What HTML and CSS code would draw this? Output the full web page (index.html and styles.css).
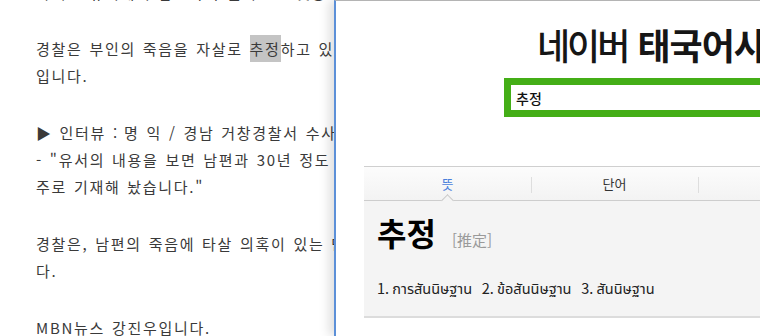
FILE: index.html
```html
<!DOCTYPE html>
<html lang="ko">
<head>
<meta charset="utf-8">
<title>네이버 태국어사전</title>
<link rel="stylesheet" href="styles.css">
</head>
<body>
<div class="screen">
  <article class="article">
    <p class="para para-cut">
      <span class="line">아내는 유서에서 남편과의 불화로 오랫동안 힘들었다고 적었습니다.</span>
    </p>
    <p class="para">
      <span class="line">경찰은 부인의 죽음을 자살로 <span class="sel">추정</span>하고 있지만 남편의 사망 경위는 조사 중</span>
      <span class="line">입니다.</span>
    </p>
    <p class="para">
      <span class="line">▶ 인터뷰 <span class="tight">:</span> 명 익 / 경남 거창경찰서 수사과장</span>
      <span class="line">- "유서의 내용을 보면 남편과 30년 정도 살면서 힘들었던 부분을 위</span>
      <span class="line">주로 기재해 놨습니다."</span>
    </p>
    <p class="para">
      <span class="line">경찰은, 남편의 죽음에 타살 의혹이 있는 만큼 정확한 사인을 조사하고 있습니</span>
      <span class="line">다.</span>
    </p>
    <p class="para">
      <span class="line">MBN뉴스 강진우입니다.</span>
    </p>
  </article>

  <section class="dict">
    <h1 class="dict-title"><span class="brand">네이버</span> <span class="name">태국어사전</span></h1>
    <div class="search">
      <span class="search-text">추정</span>
    </div>
    <div class="result">
      <nav class="tabs">
        <span class="tab tab-on">뜻<i class="caret"></i></span>
        <span class="tab">단어</span>
        <span class="tab">예문</span>
      </nav>
      <div class="entry">
        <div class="head">
          <span class="word">추정</span>
          <span class="hanja">[推定]</span>
        </div>
        <p class="means">1. การสันนิษฐาน&nbsp;&nbsp; 2. ข้อสันนิษฐาน&nbsp;&nbsp; 3. สันนิษฐาน</p>
      </div>
    </div>
  </section>
</div>
</body>
</html>
```

FILE: styles.css
```css
html, body {
  margin: 0;
  padding: 0;
  background: #fff;
}

.screen {
  display: flex;
  width: 760px;
  height: 336px;
  overflow: hidden;
  font-family: "Noto Sans CJK KR", "Noto Sans Thai", "Noto Sans", sans-serif;
}

.article {
  flex: 0 0 334px;
  overflow: hidden;
  margin-top: -21px;
  padding-left: 36px;
  box-sizing: border-box;
  color: #3a3a3a;
  font-size: 15px;
  letter-spacing: 1.7px;
  word-spacing: 1px;
}

.tight {
  letter-spacing: 0;
}

.para {
  margin: 0 0 30px 0;
}

.para-cut {
  margin-bottom: 29px;
}

.line {
  display: block;
  white-space: nowrap;
  line-height: 27px;
  height: 27px;
}

.sel {
  background: #c4c4c4;
  padding: 3px 0 3px 0;
}

.dict {
  flex: 1 1 auto;
  position: relative;
  overflow: hidden;
  background: #fff;
  border-left: 2px solid #5c90d8;
  border-top: 1px solid #b4b4b4;
  box-shadow: -5px 0 10px rgba(0, 0, 0, 0.13);
  padding-top: 23px;
  color: #111;
}

.dict-title {
  margin: 0 0 0 201px;
  white-space: nowrap;
  font-size: 36px;
  line-height: 40px;
  height: 40px;
  font-weight: 400;
  color: #161616;
}

.brand {
  letter-spacing: -3px;
  font-weight: 500;
}

.name {
  letter-spacing: -1px;
  font-weight: 700;
}

.search {
  margin: 14px 0 0 168px;
  width: 420px;
  height: 25px;
  border: 7px solid #44ae17;
  display: flex;
  align-items: center;
  padding-left: 5px;
}

.search-text {
  font-size: 14px;
  font-weight: 500;
  color: #111;
}

.result {
  margin: 49px 0 0 28px;
  width: 600px;
  border-top: 1px solid #cfcfcf;
  border-bottom: 2px solid #dcdcdc;
}

.tabs {
  display: flex;
  height: 33px;
  border-bottom: 1px solid #cdcdcd;
  background: linear-gradient(#fcfcfc, #f3f3f3);
}

.tab {
  position: relative;
  flex: 0 0 167px;
  display: flex;
  align-items: center;
  justify-content: center;
  font-size: 13px;
  color: #333;
}

.tab + .tab::before {
  content: "";
  position: absolute;
  left: 0;
  top: 10px;
  height: 16px;
  border-left: 1px solid #dedede;
}

.tab-on {
  color: #4a7fdc;
}

.caret {
  position: absolute;
  left: 50%;
  bottom: -5px;
  width: 8px;
  height: 8px;
  margin-left: -5px;
  background: #f4f4f4;
  border-left: 1px solid #c8c8c8;
  border-top: 1px solid #c8c8c8;
  transform: rotate(45deg);
}

.entry {
  background: #f4f4f4;
  padding: 11px 0 18px 13px;
}

.head {
  display: flex;
  align-items: baseline;
  gap: 16px;
  height: 40px;
  line-height: 40px;
}

.word {
  font-size: 32px;
  font-weight: 700;
  color: #000;
}

.hanja {
  font-size: 15px;
  color: #9a9a9a;
}

.means {
  margin: 26px 0 0 0;
  font-size: 14.5px;
  line-height: 20px;
  color: #222;
  white-space: nowrap;
}
```
